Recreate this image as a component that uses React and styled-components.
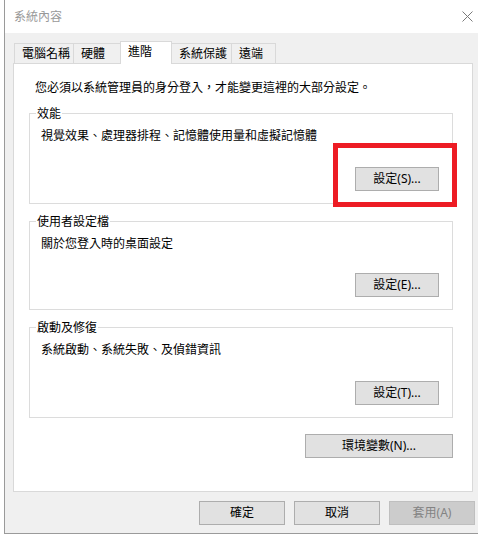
import styled, { createGlobalStyle } from 'styled-components';

const GlobalStyle = createGlobalStyle`
  html, body {
    margin: 0;
    padding: 0;
    background: #fff;
  }

  body {
    font-family: "Noto Sans", "Noto Sans CJK TC", sans-serif;
    font-size: 12px;
    color: #000;
  }

  * {
    box-sizing: border-box;
  }
`;

const Screen = styled.div`
  display: flex;
  width: 478px;
  height: 536px;
  padding-left: 4px;
  overflow: hidden;
  background: #fff;
`;

const Dialog = styled.div`
  display: flex;
  flex-direction: column;
  width: 474px;
  height: 534px;
  background: #f0f0f0;
  border-left: 1px solid #9a9a9a;
  border-bottom: 1px solid #9a9a9a;
`;

const TitleBar = styled.div`
  display: flex;
  align-items: center;
  justify-content: space-between;
  height: 33px;
  padding: 0 5px 0 9px;
  background: #fff;
  color: #999;
  line-height: 16px;
`;

const Body = styled.div`
  display: flex;
  flex-direction: column;
  flex: 1;
  padding: 8px 0 0 8px;
`;

const TabRow = styled.div`
  display: flex;
  align-items: flex-end;
  height: 22px;
  margin-left: 1px;
`;

const Tab = styled.div`
  position: relative;
  display: flex;
  align-items: center;
  width: ${p => p.$w}px;
  height: ${p => (p.$active ? 23 : 20)}px;
  margin-left: ${p => (p.$first ? 0 : -1)}px;
  margin-bottom: ${p => (p.$active ? -1 : 0)}px;
  padding: ${p => (p.$active ? '0 0 2px 7px' : '0 0 0 7px')};
  background: ${p => (p.$active ? '#fff' : '#f0f0f0')};
  border: 1px solid #d9d9d9;
  border-bottom: none;
  line-height: 16px;
  z-index: ${p => (p.$active ? 1 : 0)};
  white-space: nowrap;
`;

const Panel = styled.div`
  display: flex;
  flex-direction: column;
  width: 460px;
  height: 429px;
  padding: 16px 19px 0 15px;
  background: #fff;
  border: 1px solid #d9d9d9;
`;

const Intro = styled.div`
  padding-left: 6px;
  line-height: 16px;
  white-space: nowrap;
`;

const Groups = styled.div`
  display: flex;
  flex-direction: column;
  gap: 17px;
  margin-top: 17px;
`;

const Group = styled.div`
  position: relative;
  display: flex;
  flex-direction: column;
  height: ${p => p.$h}px;
  padding: 14px 13px 12px 11px;
  border: 1px solid #dcdcdc;
`;

const Legend = styled.span`
  position: absolute;
  top: -8px;
  left: 6px;
  padding: 0 1px;
  background: #fff;
  line-height: 16px;
`;

const Desc = styled.div`
  line-height: 16px;
  white-space: nowrap;
`;

const Button = styled.button`
  width: ${p => p.$w}px;
  height: 24px;
  padding: 0;
  background: ${p => (p.disabled ? '#cccccc' : '#e1e1e1')};
  border: 1px solid ${p => (p.disabled ? '#bfbfbf' : '#adadad')};
  border-radius: 0;
  color: ${p => (p.disabled ? '#838383' : '#000')};
  font: inherit;
  line-height: 22px;
  text-align: center;
`;

const GroupButton = styled(Button)`
  margin-top: auto;
  align-self: flex-end;
`;

const EnvButton = styled(Button)`
  margin-top: 16px;
  align-self: flex-end;
`;

const Highlight = styled.div`
  position: absolute;
  left: 303px;
  top: 29px;
  width: 124px;
  height: 64px;
  border: 5px solid #ed1c24;
`;

const Footer = styled.div`
  display: flex;
  justify-content: flex-end;
  gap: 9px;
  margin-top: 9px;
  padding-right: 3px;
`;

const CloseIcon = () => (
  <svg width="11" height="11" viewBox="0 0 11 11">
    <path d="M0.5 0.5 L10.5 10.5 M10.5 0.5 L0.5 10.5" stroke="#7a7a7a" strokeWidth="1" fill="none" />
  </svg>
);

const tabs = [
  { label: '電腦名稱', w: 60 },
  { label: '硬體', w: 48 },
  { label: '進階', w: 52, active: true },
  { label: '系統保護', w: 61 },
  { label: '遠端', w: 45 },
];

const groups = [
  { title: '效能', desc: '視覺效果、處理器排程、記憶體使用量和虛擬記憶體', button: '設定(S)...', h: 91, mark: true },
  { title: '使用者設定檔', desc: '關於您登入時的桌面設定', button: '設定(E)...', h: 89 },
  { title: '啟動及修復', desc: '系統啟動、系統失敗、及偵錯資訊', button: '設定(T)...', h: 91 },
];

export default function App() {
  return (
    <>
      <GlobalStyle />
      <Screen>
        <Dialog>
          <TitleBar>
            <span>系統內容</span>
            <CloseIcon />
          </TitleBar>
          <Body>
            <TabRow>
              {tabs.map((t, i) => (
                <Tab key={t.label} $w={t.w} $active={t.active} $first={i === 0}>
                  {t.label}
                </Tab>
              ))}
            </TabRow>
            <Panel>
              <Intro>您必須以系統管理員的身分登入，才能變更這裡的大部分設定。</Intro>
              <Groups>
                {groups.map(g => (
                  <Group key={g.title} $h={g.h}>
                    <Legend>{g.title}</Legend>
                    <Desc>{g.desc}</Desc>
                    <GroupButton $w={84}>{g.button}</GroupButton>
                    {g.mark && <Highlight />}
                  </Group>
                ))}
              </Groups>
              <EnvButton $w={148}>環境變數(N)...</EnvButton>
            </Panel>
            <Footer>
              <Button $w={86}>確定</Button>
              <Button $w={86}>取消</Button>
              <Button $w={86} disabled>套用(A)</Button>
            </Footer>
          </Body>
        </Dialog>
      </Screen>
    </>
  );
}
